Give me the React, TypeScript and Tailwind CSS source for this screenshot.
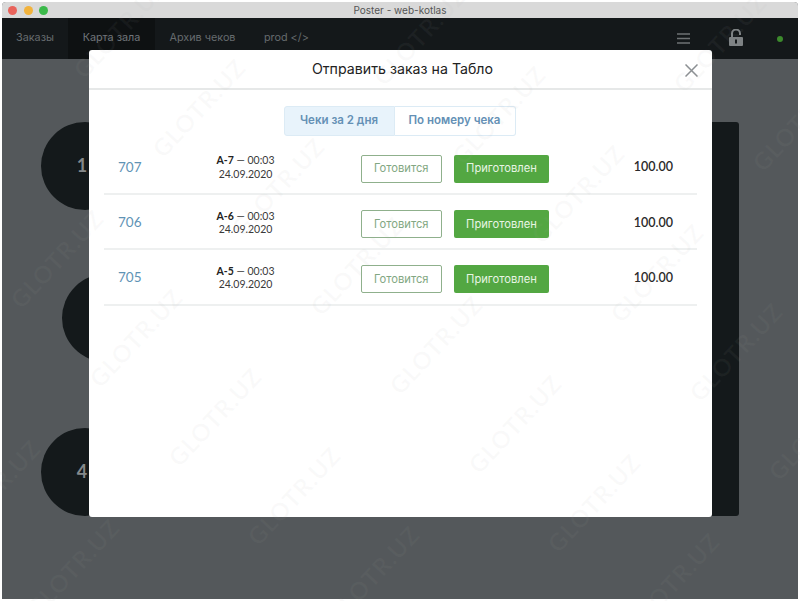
import React from 'react'

const orders = [
    { id: "707", table: "А-7" },
    { id: "706", table: "А-6" },
    { id: "705", table: "А-5" },
]

// watermark repeats on a slanted lattice
const marks: Array<[number, number]> = []
for (let a = -3; a < 5; a++) {
    for (let b = -8; b < 8; b++) {
        const x = 215 + a * 300 + b * 79
        const y = 417 + a * 7 + b * 79
        if (x > -20 && x < 820 && y > -20 && y < 630) {
            marks.push([x, y])
        }
    }
}

function OrderRow({ id, table }: { id: string, table: string }) {
    return (
        <div className="flex h-[55.4px] items-center border-b-2 border-[#eef0f0]">
            <div className="mt-[1px] w-[98px] pl-[14px] text-[13.5px] text-[#5f93b5]">{id}</div>
            <div className="mt-[3px] w-[86px] pl-[1px] text-center text-[10.5px] leading-[13.5px] text-[#3a3a3a]">
                <div><span className="font-bold text-[#222]">{table}</span> — 00:03</div>
                <div>24.09.2020</div>
            </div>
            <div className="mt-[5px] ml-[72.5px] flex gap-[12px] font-['Inter',sans-serif]">
                <div className="flex h-[28px] w-[81.5px] items-center justify-center rounded-[2px] border border-[#8fb08c] text-[11.2px] text-[#82a782]">Готовится</div>
                <div className="flex h-[28px] w-[95px] items-center justify-center rounded-[2px] bg-[#53a742] text-[11.2px] text-[#e8f5e4]">Приготовлен</div>
            </div>
            <div className="mt-[3px] ml-auto pr-[24px] text-[12.5px] font-semibold text-[#2a2a2a]">100.00</div>
        </div>
    )
}

export default function App() {
    return (
        <div className="relative h-[601px] w-[800px] overflow-hidden bg-white font-['Lato','Noto_Sans',sans-serif]">
            <div className="absolute inset-x-[2px] top-[2px] bottom-[2px] flex flex-col overflow-hidden rounded-t-[4px] bg-[#54585b]">
                {/* title bar */}
                <div className="relative flex h-[16px] shrink-0 items-center justify-center bg-[#d9d9d9] font-['Inter',sans-serif] text-[10px] text-[#555]">
                    <div className="absolute left-[6px] flex gap-[6.5px]">
                        <div className="h-[9px] w-[9px] rounded-full bg-[#e9635b]" />
                        <div className="h-[9px] w-[9px] rounded-full bg-[#f2b33d]" />
                        <div className="h-[9px] w-[9px] rounded-full bg-[#3bb94a]" />
                    </div>
                    Poster - web-kotlas
                </div>

                {/* nav */}
                <div className="flex h-[41px] shrink-0 items-center bg-[#14181a] font-['Inter',sans-serif] text-[10.8px] text-[#666b6e]">
                    <div className="flex h-full w-[66px] items-center pl-[14px] pb-[1px]">Заказы</div>
                    <div className="flex h-full w-[87px] items-center justify-center bg-[#0e1112] pb-[1px] text-[#70757a]">Карта зала</div>
                    <div className="flex h-full w-[95px] items-center justify-center pb-[1px]">Архив чеков</div>
                    <div className="flex h-full items-center pl-[14px] pb-[1px]">prod &lt;/&gt;</div>
                    <div className="ml-auto flex items-center">
                        <svg width="13" height="11" viewBox="0 0 13 11" className="mr-[39px]">
                            <path d="M0 1h13M0 5.5h13M0 10h13" stroke="#6e7274" strokeWidth="1.6" />
                        </svg>
                        <svg width="14" height="17" viewBox="0 0 14 17" className="mr-[34px] mb-[2px]">
                            <path d="M3 8V4.5a4 4 0 0 1 8 0V6" fill="none" stroke="#7e8284" strokeWidth="2" />
                            <rect x="0" y="8" width="14" height="9" rx="1" fill="#7e8284" />
                            <rect x="6" y="10.5" width="2" height="4" fill="#14181a" />
                        </svg>
                        <div className="mr-[15px] h-[6px] w-[6px] rounded-full bg-[#3c8a2c]" />
                    </div>
                </div>

                {/* hall map */}
                <div className="relative grow">
                    <div className="absolute left-[39px] top-[63px] flex h-[88px] w-[88px] items-center justify-center rounded-full bg-[#14191b] pr-[6px] pb-[2px] text-[18px] font-bold text-[#85888a]">1</div>
                    <div className="absolute left-[60px] top-[215px] h-[88px] w-[88px] rounded-full bg-[#14191b]" />
                    <div className="absolute left-[39px] top-[369px] flex h-[88px] w-[88px] items-center justify-center rounded-full bg-[#14191b] pr-[6px] pb-[2px] text-[18px] font-bold text-[#85888a]">4</div>
                    <div className="absolute left-[640px] top-[63px] h-[394px] w-[97px] rounded-[3px] bg-[#14191b]" />
                </div>
            </div>

            {/* modal */}
            <div className="absolute left-[89px] top-[50px] flex h-[467px] w-[623px] flex-col rounded-[3px] bg-white">
                <div className="relative flex h-[40px] shrink-0 items-center justify-center border-b-2 border-[#e6e8e8] pl-[4px] font-['Inter',sans-serif] text-[14.2px] text-[#222]">
                    Отправить заказ на Табло
                    <svg width="13" height="13" viewBox="0 0 13 13" className="absolute right-[14px] top-[14px]">
                        <path d="M.5.5l12 12M12.5.5l-12 12" stroke="#8b8f92" strokeWidth="1.5" />
                    </svg>
                </div>

                <div className="mt-[16px] mr-[2px] flex justify-center font-['Inter',sans-serif] text-[11.5px] font-semibold text-[#6490b5]">
                    <div className="flex h-[30px] w-[111px] items-center justify-center rounded-l-[3px] border border-[#dcebf5] bg-[#e8f3fb]">Чеки за 2 дня</div>
                    <div className="flex h-[30px] w-[121px] items-center justify-center rounded-r-[3px] border border-l-0 border-[#dcebf5]">По номеру чека</div>
                </div>

                <div className="mx-[15px] mt-[3.5px]">
                    {orders.map((o) => (
                        <OrderRow key={o.id} id={o.id} table={o.table} />
                    ))}
                </div>
            </div>

            {/* watermark */}
            {marks.map(([x, y], i) => (
                <div key={i} className="pointer-events-none absolute w-[150px] -rotate-[47deg] text-center text-[24px] leading-[28px] font-bold tracking-[1px] whitespace-nowrap text-[#aaa]/[0.06]" style={{ left: x - 75, top: y - 14 }}>
                    GLOTR.UZ
                </div>
            ))}
        </div>
    )
}
